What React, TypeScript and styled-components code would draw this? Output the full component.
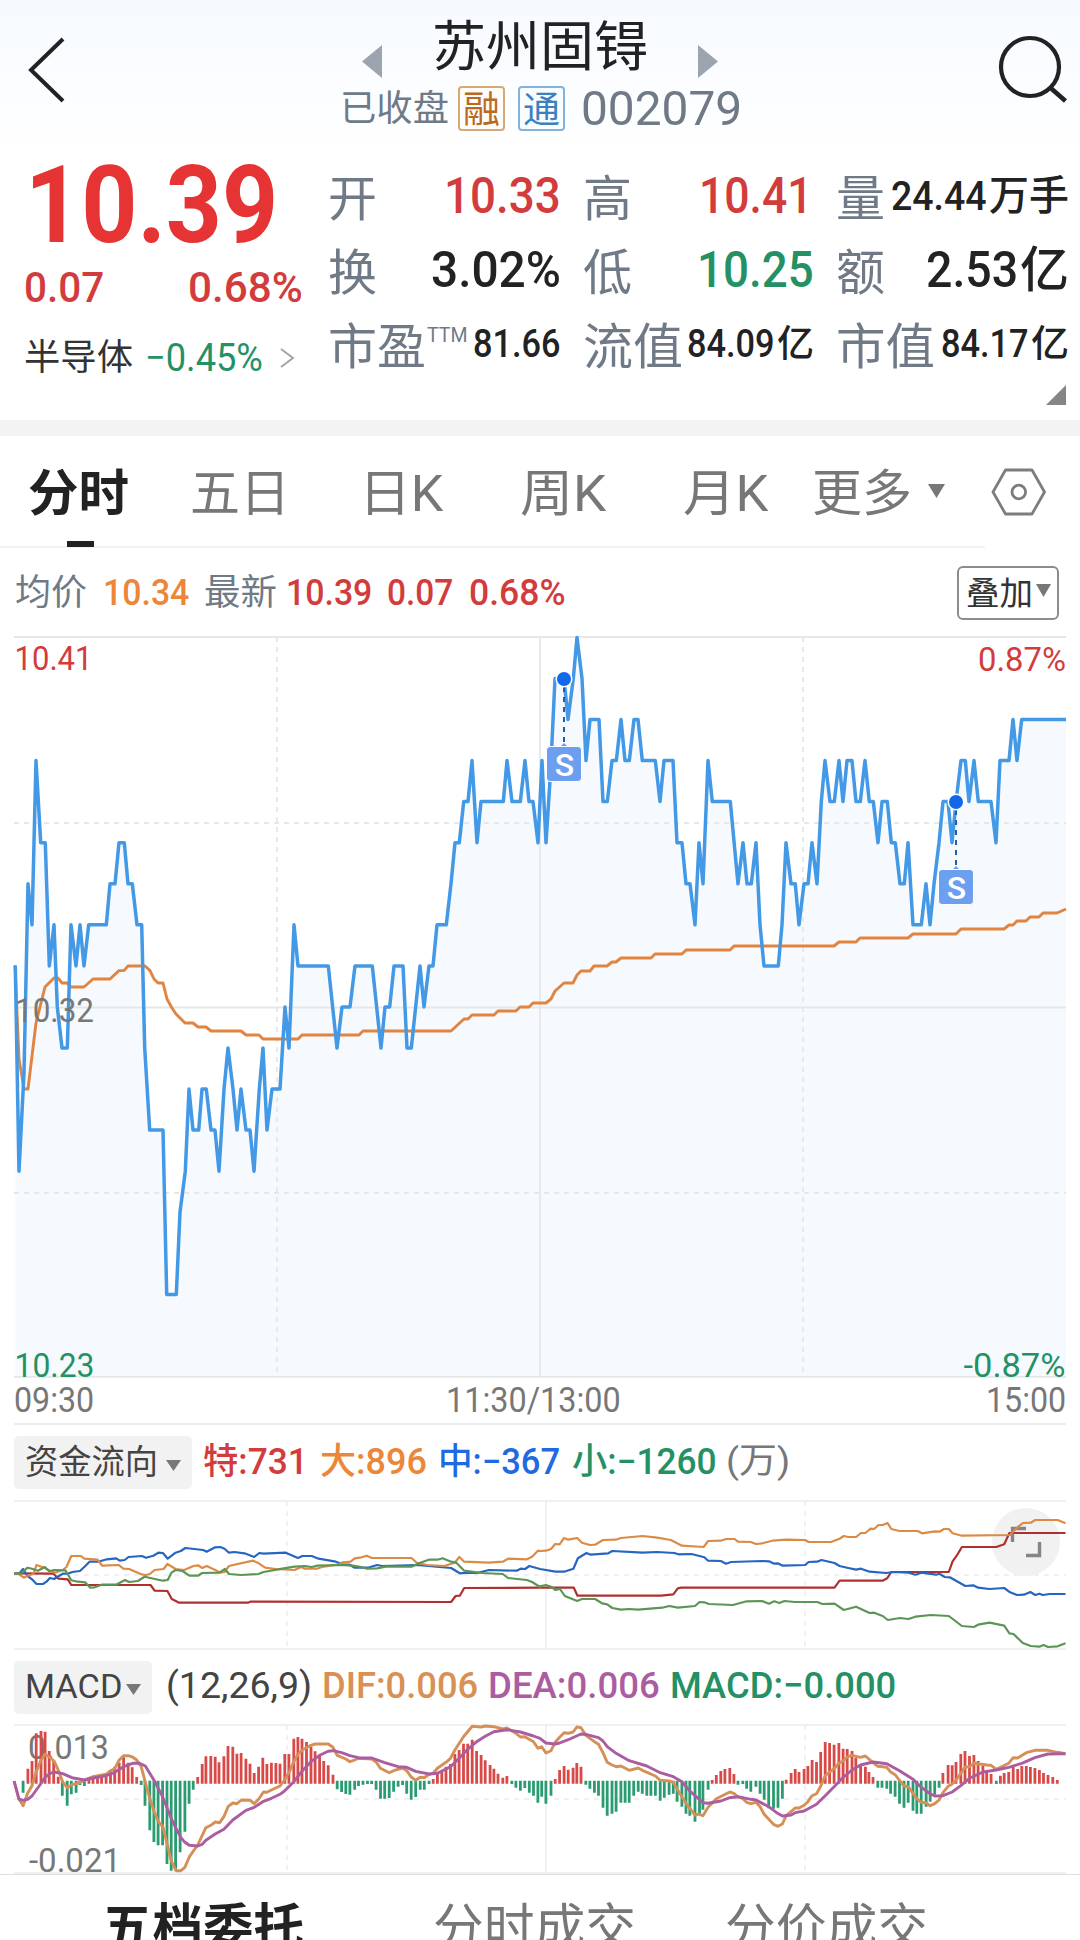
import React, { useLayoutEffect, useRef, useState } from 'react';
import styled, { createGlobalStyle, css } from 'styled-components';

const RED = '#d23c3c';
const GREEN = '#249165';
const ORANGE = '#ec8638';
const BLUE = '#1f6ae0';
const SLATE = '#6f7a86';
const INK = '#222222';
const GREY = '#777777';
const FONT = `Roboto, "Noto Sans CJK SC", sans-serif`;

const GlobalStyle = createGlobalStyle`
  *, *::before, *::after { box-sizing: border-box; }
  body { margin: 0; background: #fff; font-family: ${FONT}; }
`;

/* ---------- text that is squeezed or stretched to a set width ---------- */

const FitBox = styled.span<{ $w: number; $size: number; $color?: string; $weight?: number }>`
  display: inline-block;
  flex: none;
  width: ${p => p.$w}px;
  height: ${p => p.$size}px;
  font-size: ${p => p.$size}px;
  line-height: 1;
  color: ${p => p.$color || INK};
  font-weight: ${p => p.$weight || 400};
  white-space: nowrap;
`;
const FitInner = styled.span`
  display: inline-block;
  vertical-align: top;
  transform-origin: 0 0;
`;

type FitProps = { w: number; size: number; color?: string; weight?: number; children: string };

function Fit({ w, size, color, weight, children }: FitProps) {
  const ref = useRef<HTMLSpanElement>(null);
  const [scale, setScale] = useState(1);
  useLayoutEffect(() => {
    if (ref.current) setScale(w / ref.current.offsetWidth);
  }, [w, size, weight, children]);
  return (
    <FitBox $w={w} $size={size} $color={color} $weight={weight}>
      <FitInner ref={ref} style={{ transform: `scaleX(${scale})` }}>{children}</FitInner>
    </FitBox>
  );
}

/* ---------- layout parts ---------- */

const Page = styled.main`
  width: 1080px;
  height: 1940px;
  overflow: hidden;
  display: flex;
  flex-direction: column;
  background: #fff;
`;

const Header = styled.header`
  flex: none;
  height: 150px;
  display: grid;
  grid-template-columns: 100px 1fr 100px;
  background: linear-gradient(#f6faff, #ffffff);
`;
const IconSlot = styled.div`
  display: block;
  height: 150px;
  svg { display: block; }
`;
const HeaderCenter = styled.div`
  display: flex;
  flex-direction: column;
  align-items: center;
`;
const TitleRow = styled.div`
  display: flex;
  align-items: flex-end;
  gap: 50px;
  height: 78px;
`;
const TitleText = styled.div`
  display: flex;
  padding-bottom: 3px;
`;
const SubRow = styled.div`
  display: flex;
  align-items: center;
  height: 45px;
  margin: 8px 0 0 2px;
`;
const Badge = styled.span<{ $tone: string; $line: string; $fill: string; $gap: number }>`
  display: flex;
  justify-content: center;
  align-items: center;
  width: 47px;
  height: 45px;
  margin-left: ${p => p.$gap}px;
  padding-top: 3px;
  border: 2px solid ${p => p.$line};
  border-radius: 4px;
  background: ${p => p.$fill};
  color: ${p => p.$tone};
  font-size: 37px;
  line-height: 1;
`;
const Code = styled.span`
  display: flex;
  margin-left: 16px;
`;

const Quote = styled.section`
  flex: none;
  height: 270px;
  display: flex;
  flex-direction: column;
`;
const QuoteBody = styled.div`
  display: grid;
  grid-template-columns: 279px 742px;
  column-gap: 25px;
  height: 235px;
  padding-left: 24px;
`;
const PriceColumn = styled.div`
  display: flex;
  flex-direction: column;
  padding-top: 1px;
`;
const BigPrice = styled.div`
  display: flex;
  height: 115px;
  padding-left: 1px;
`;
const ChangeRow = styled.div`
  display: flex;
  justify-content: space-between;
  height: 44px;
`;
const SectorRow = styled.div`
  display: flex;
  align-items: center;
  gap: 12px;
  height: 40px;
  margin-top: 28px;
`;
const SectorArrow = styled.svg`
  margin-left: 4px;
`;
const Stats = styled.div`
  display: grid;
  grid-template-columns: 233px 231px 233px;
  grid-auto-rows: 74px;
  column-gap: 22px;
  padding-top: 9px;
`;
const Stat = styled.div`
  display: flex;
  align-items: center;
  justify-content: space-between;
`;
const StatLabel = styled.span`
  display: flex;
  padding-top: 7px;
`;
const StatSup = styled.span`
  display: flex;
  padding: 0 5px 18px 0;
`;
const StatValue = styled.span<{ $inset?: number }>`
  display: flex;
  align-items: center;
  gap: 2px;
  padding-right: ${p => p.$inset || 0}px;
`;
const CornerRow = styled.div`
  display: flex;
  justify-content: flex-end;
  padding-right: 14px;
`;
const Band = styled.div`
  flex: none;
  height: 16px;
  background: #f3f3f3;
`;

const TabBar = styled.nav`
  flex: none;
  display: flex;
  height: 112px;
`;
const TabList = styled.div`
  display: flex;
  width: 985px;
  padding: 5px 0 0 28px;
  border-bottom: 2px solid #f2f2f2;
`;
const Tab = styled.div<{ $w: number; $active?: boolean }>`
  position: relative;
  display: flex;
  align-items: center;
  gap: 16px;
  width: ${p => p.$w}px;
  ${p => p.$active && css`
    &::after {
      content: '';
      position: absolute;
      left: 39px;
      bottom: -1px;
      width: 27px;
      height: 6px;
      background: ${INK};
    }
  `}
`;
const TabSettings = styled.div`
  display: flex;
  align-items: center;
  padding-left: 5px;
`;

const InfoRow = styled.div`
  flex: none;
  display: flex;
  align-items: center;
  height: 88px;
  padding: 2px 21px 0 15px;
`;
const Item = styled.span<{ $gap?: number; $lift?: number }>`
  display: flex;
  margin-left: ${p => p.$gap || 0}px;
  padding-bottom: ${p => p.$lift || 0}px;
`;
const OverlayButton = styled.button`
  display: flex;
  align-items: center;
  gap: 4px;
  width: 102px;
  height: 54px;
  margin-left: auto;
  padding: 0 0 0 6px;
  border: 2px solid #8c8c8c;
  border-radius: 6px;
  background: #fff;
  font-family: inherit;
`;

const Chart = styled.svg`
  flex: none;
  display: block;
  margin-left: 14px;
  overflow: visible;
`;
const TimeAxis = styled.div`
  flex: none;
  display: flex;
  align-items: center;
  height: 47px;
  margin: 0 14px;
  border-bottom: 2px solid #ebebeb;
`;
const IndicatorRow = styled.div<{ $h: number }>`
  flex: none;
  display: flex;
  align-items: center;
  height: ${p => p.$h}px;
  padding-left: 14px;
`;
const Picker = styled.button<{ $w: number; $lift: number }>`
  display: flex;
  align-items: center;
  justify-content: space-between;
  width: ${p => p.$w}px;
  height: 53px;
  padding: 0 11px ${p => p.$lift}px 11px;
  border: 0;
  border-radius: 5px;
  background: #f2f2f2;
  font-family: inherit;
`;
const BottomTabs = styled.nav`
  flex: none;
  display: flex;
  height: 80px;
  padding: 28px 0 0 102px;
  border-top: 1px solid #dfdfdf;
`;

const Caret = ({ w, h, color = GREY, dy = 0 }: { w: number; h: number; color?: string; dy?: number }) => (
  <svg width={w} height={h + Math.abs(dy)} viewBox={`0 ${dy > 0 ? -dy : 0} ${w} ${h + Math.abs(dy)}`}>
    <path d={`M0 0H${w}L${w / 2} ${h}Z`} fill={color} />
  </svg>
);

/* ---------- price chart ---------- */

// x position and last price, in hundredths above 10.00
const PRICE = `15.3,33 19,28 24,30.4 28,35 32,34 36,38 40.7,36 45.3,36 49.3,33 54,34 57.3,32 62,31 67.3,31 71,34 76,33 80,34 84,33 88.7,34
106.3,34 110,35 115,35 119,36 124.3,36 128,35 132.3,35 137,34 141.7,34 144.7,31 149.7,29 163,29 166.7,25 176.3,25 180,27 185.3,28 189,30
193,29 198.7,29 202,30 206.3,30 211,29 215,29 219,28 224,30 228,31 233,30 237,29 241,30 246,29 250,29 254,28 259.3,30 263,31 267,29 272,30
280,30 285,32 289,31 294,34 298,33 328.3,33 337,31 342,32 350,32 355,33 372.3,33 381,31 385,32 389.7,32 394,33 403,33 407,31 411.3,31
420,33 424,32 429,33 433,33 437,34 446.3,34 451,35 455,36 459.3,36 463.7,37 468,37 472,38 477,36 481,37 503.3,37 507,38 512,37 520.3,37
525,38 529,37 533,37 538,36 542,38 546,36 550.5,37.7 555,40 564,40 568,39 573.3,40 577,41 582,40 586,38 590,39 599,39 603,37 607.3,37
612,38 616.3,38 621,39 625,38 629.3,38 634,39 638,39 642.3,38 655.3,38 660,37 664,38 673,38 677,36 682,36 686,35 690,35 695,34 699,36
703,35 708,38 712.3,37 730.3,37 738,35 743,36 747,35 751.3,35 756,36 760,34 764,33 778.3,33 782,34 786,36 791,35 795.3,35 799,34 804,35
808,35 812,36 817,35 821.3,37 825,38 830,37 834.3,37 839,38 843,37 847,38 852,38 856,37 860.3,37 865,38 869.3,37 873.3,37 878,36 882,37
887.3,37 891.3,36 895.3,36 900,35 904.3,35 908,36 913,34 921.3,34 926,35 930,34 934,35 939,36 943,37 948,37 952,36 956,37 961,38
965.3,38 969,37 974,38 978.3,37 991,37 996,36 1000,38 1009,38 1013,39 1017,38 1021.7,39 1066,39`;

const AVERAGE = `15,965 19,1059 24,1089 28,1089 36,1023 45,987 49,983 54,978 58,978 62,983 67,983 71,987 84,987 93,979 110,979 119,970.6
124,970.6 128,966 145,966 150,970.6 154,979 158,983 163,983 167,999 172,1008 176,1014 185,1023 193,1023 198,1027 206,1027 211,1031 241,1031
246,1035 259,1035 263,1039 298,1039 302,1035 359,1035 363,1031 451,1031 464,1019 468,1019 472,1015 494,1015 498,1011 516,1011 520,1007
529,1007 533,1003 546,1003 551,999 555,991 564,983 573,983 577,975 581,971 590,971 594,966 607,966 612,962 616,962 621,958 651,958 655,954
682,954 686,950 730,950 734,946 834,946 839,942 856,942 860,938 908,938 913,934 956,934 961,929 1004,929 1009,925 1013,925 1017,921
1026,921 1030,917 1039,917 1043,913 1057,913 1066,909`;

const parse = (raw: string): number[][] => raw.trim().split(/\s+/).map(p => p.split(',').map(Number));
const join = (pts: number[][]) => pts.map(([x, y]) => `${x.toFixed(1)},${y.toFixed(1)}`).join(' ');

const priceY = (cents: number) => 637.4 + (41 - cents) * 41.06;
const pricePoints = join(parse(PRICE).map(([x, c]) => [x, priceY(c)]));

const Label = ({ x, y, w, size = 34, color, children }: { x: number; y: number; w: number; size?: number; color: string; children: string }) => (
  <text x={x} y={y} textLength={w} lengthAdjust="spacingAndGlyphs" fontSize={size} fill={color} fontFamily={FONT}>{children}</text>
);

const Marker = ({ x, y }: { x: number; y: number }) => (
  <g>
    <path d={`M${x} ${y + 8}V${y + 64}`} stroke="#1f5fae" strokeWidth="2" strokeDasharray="5 5" />
    <circle cx={x} cy={y} r="8.5" fill="#fff" />
    <circle cx={x} cy={y} r="7" fill="#1268e8" />
    <path d={`M${x - 5} ${y + 69}L${x} ${y + 64}L${x + 5} ${y + 69}Z`} fill="#6d9ff1" />
    <rect x={x - 17.5} y={y + 67.5} width="35" height="35" rx="3.5" fill="#6d9ff1" stroke="#fff" strokeWidth="1" />
    <text x={x + 0.5} y={y + 96.5} textAnchor="middle" fontSize="32" fontWeight="500" fill="#fff" fontFamily={FONT}>S</text>
  </g>
);

const PriceChart = () => (
  <Chart width="1052" height="742" viewBox="14 636 1052 742">
    <polygon points={`15.3,1377 ${pricePoints} 1066,1377`} fill="#f6faff" />
    <g stroke="#e6e8e8" strokeWidth="1.8" fill="none">
      <path d="M14 637H1066M14 1007.5H1066M14 1376.8H1066M540 637V1377" />
      <path d="M14 823H1066M14 1193H1066" strokeDasharray="5 5" />
      <path d="M277 637V1377M803 637V1377" strokeDasharray="5 5" />
    </g>
    <polyline points={AVERAGE} fill="none" stroke="#e0843f" strokeWidth="2.9" strokeLinejoin="round" />
    <polyline points={pricePoints} fill="none" stroke="#4499e6" strokeWidth="3.5" strokeLinejoin="round" />
    <Label x={15} y={1022} w={79} color={GREY}>10.32</Label>
    <Label x={14.5} y={670} w={78} color={RED}>10.41</Label>
    <Label x={978} y={671} w={88} color={RED}>0.87%</Label>
    <Label x={14.5} y={1377} w={80} color={GREEN}>10.23</Label>
    <Label x={963.5} y={1377} w={102} color={GREEN}>-0.87%</Label>
    <Marker x={564} y={679} />
    <Marker x={956} y={802} />
  </Chart>
);

/* ---------- sub charts: samples of the morning and the afternoon half ---------- */

const UNIT_X = 540 / 1568;
const half = (raw: string, x0: number, y0: number) => parse(raw).map(([x, y]) => [x0 + x * UNIT_X, y0 + y / 3]);
const whole = (am: string, pm: string, y0: number) => join([...half(am, 0, y0), ...half(pm, 540, y0)]);

const FLOW = [
  {
    color: '#b03030',
    am: `41,670 155,671 170,686 197,688 207,705 437,705 449,722 486,723 499,747 520,758 720,758 727,755 1310,756 1323,738 1335,737 1348,714 1568,713`,
    pm: `0,713 98,713 109,737 352,737 387,733 400,715 410,713 855,713 870,692 995,692 1008,685 1020,666 1187,666 1198,634 1210,617 1225,591 1325,591 1348,583 1363,549 1526,549`,
  },
  {
    color: '#2665c0',
    am: `41,670 55,672 67,657 80,678 93,688 106,702 125,702 135,695 145,684 157,687 182,671 197,671 210,666 232,663 247,649 260,635 285,635 310,628 337,625 348,632 362,630 373,621 412,618 424,623 445,617 460,608 473,609 487,626 510,608 525,603 538,594 590,600 600,605 625,592 640,591 652,596 665,608 680,606 710,610 738,621 753,609 765,611 830,608 865,624 878,618 905,618 925,626 975,635 995,643 1015,644 1030,653 1068,653 1095,645 1110,648 1210,645 1310,654 1335,670 1360,668 1385,669 1420,660 1500,662 1512,656 1525,657 1537,648 1568,657`,
    pm: `0,657 45,665 70,665 97,656 110,625 135,609 147,614 198,610 210,603 298,608 340,606 390,609 402,613 440,612 477,622 488,632 525,633 540,641 555,636 645,633 665,634 680,641 690,640 705,647 770,645 780,636 805,635 817,630 855,639 870,648 895,654 918,659 932,656 957,665 1005,669 1025,666 1070,668 1090,674 1108,668 1150,674 1160,671 1175,681 1190,682 1235,708 1258,706 1272,713 1305,717 1348,714 1365,727 1385,735 1405,734 1424,726 1438,735 1450,731 1460,735 1480,732 1526,732`,
  },
  {
    color: '#dc8a44',
    am: `41,670 55,672 69,683 80,677 97,672 106,645 130,654 145,662 160,668 182,660 193,651 207,618 235,618 245,626 283,629 297,647 345,645 358,656 375,657 410,673 424,675 435,672 449,660 475,657 486,642 510,657 535,660 562,648 575,646 587,654 600,648 625,660 640,668 652,666 665,648 690,642 735,632 748,638 770,653 800,657 855,660 875,651 885,656 920,656 935,651 985,643 995,637 1018,635 1030,625 1050,622 1065,617 1080,624 1195,624 1210,638 1240,645 1290,648 1320,638 1334,621 1348,635 1420,638 1460,635 1475,626 1530,628 1545,620 1562,602`,
    pm: `0,603 17,602 32,597 44,582 57,583 70,564 82,569 108,564 122,578 145,585 160,584 183,570 220,569 235,564 298,558 340,563 380,570 412,587 475,591 488,573 525,572 540,567 565,567 575,575 612,576 627,582 645,580 675,572 715,569 770,570 780,576 845,576 870,566 882,558 895,561 918,561 932,549 945,549 960,536 970,537 983,525 995,525 1009,519 1020,537 1044,543 1097,543 1109,550 1147,544 1160,545 1173,537 1187,537 1198,550 1225,557 1365,555 1385,533 1402,519 1425,518 1438,510 1503,510 1526,520`,
  },
  {
    color: '#5c9656',
    am: `41,670 60,671 80,653 93,656 110,662 130,651 143,664 157,660 190,661 207,691 220,694 247,697 262,713 275,712 295,704 337,704 363,690 375,696 400,693 420,680 473,692 487,690 498,668 510,660 530,663 550,677 575,677 587,669 637,668 653,657 665,672 700,675 750,672 765,666 820,656 855,650 885,648 905,651 920,647 985,645 1025,647 1050,651 1065,656 1095,655 1120,650 1195,650 1220,638 1245,629 1270,629 1285,625 1310,635 1325,638 1348,662 1400,669 1460,672 1475,684 1530,690 1545,696 1568,711`,
    pm: `0,709 17,705 32,710 45,720 58,717 72,738 108,753 122,747 160,747 180,760 195,763 210,774 235,779 258,777 285,779 355,773 375,768 400,773 450,768 463,756 477,757 490,762 560,765 600,754 645,753 665,761 680,754 695,759 710,753 740,756 805,756 820,762 855,761 882,780 918,770 957,789 970,788 995,798 1010,810 1045,804 1070,807 1090,800 1135,795 1187,798 1225,828 1260,831 1272,824 1305,818 1348,827 1363,850 1375,852 1402,879 1425,888 1450,890 1462,885 1475,891 1503,889 1526,880`,
  },
];

const SubGrid = ({ top }: { top: number }) => (
  <g stroke="#f0f0f0" strokeWidth="1.8" fill="none">
    <path d={`M14 ${top}H1066M14 ${top + 148}H1066M546 ${top}V${top + 148}`} />
    <path d={`M14 ${top + 74}H1066M287 ${top}V${top + 148}M805 ${top}V${top + 148}`} strokeDasharray="5 5" />
  </g>
);

const FlowChart = () => (
  <Chart width="1052" height="151" viewBox="14 1500 1052 151">
    <SubGrid top={1501} />
    <circle cx="1026" cy="1542" r="34" fill="#f1f1f1" />
    <path d="M1012.5 1542V1528.5H1026M1039.5 1542V1555.5H1026" fill="none" stroke="#858585" strokeWidth="3.4" />
    {FLOW.map(s => (
      <polyline key={s.color} points={whole(s.am, s.pm, 1350)} fill="none" stroke={s.color} strokeWidth="2.2" strokeLinejoin="round" />
    ))}
  </Chart>
);

const BARS_AM = `67,428 81,356 93,333 105,250 119,243 131,245 143,303 156,333 169,380 181,437 195,467 207,433 221,428 232,405 245,408 258,385 270,381 283,378 295,375 308,370 321,362 333,350 346,338 359,322 372,338 384,352 397,381 410,405 421,467 435,541 447,576 459,586 472,586 485,642 497,662 510,658 523,607 537,545 549,461 561,419 574,381 587,342 598,319 612,318 625,320 636,337 650,319 662,288 676,290 688,311 700,309 714,326 726,341 738,369 751,350 763,323 775,342 788,338 801,339 813,341 827,312 839,312 853,266 865,261 877,266 890,276 903,290 915,304 928,318 940,333 953,346 967,374 979,418 992,426 1004,432 1016,434 1030,419 1041,408 1054,404 1067,402 1079,402 1092,419 1105,446 1117,446 1130,444 1143,425 1156,410 1169,405 1181,431 1194,449 1207,441 1220,419 1232,419 1246,402 1258,387 1270,371 1283,365 1295,350 1308,342 1321,312 1333,300 1346,281 1358,281 1371,269 1384,303 1397,315 1409,331 1423,345 1434,356 1446,371 1460,383 1472,378 1486,402 1498,413 1511,422 1524,414 1537,428 1549,437 1562,458`;
const BARS_PM = `5,440 17,461 32,437 44,387 57,360 70,348 82,359 96,353 107,339 119,350 133,404 145,416 158,428 170,437 183,473 195,497 209,491 221,485 235,458 247,458 259,458 272,437 285,425 297,431 310,437 322,437 335,437 349,452 361,443 375,434 387,431 398,455 412,470 424,491 435,497 450,515 463,494 473,479 488,419 500,390 512,375 525,363 537,357 551,354 563,372 575,404 589,402 600,416 612,425 627,410 639,431 651,449 664,475 678,476 691,473 704,446 715,389 729,369 741,357 752,366 767,357 778,348 790,330 803,336 815,306 828,276 841,279 854,284 868,279 880,296 892,297 906,303 917,323 931,342 945,350 955,366 967,381 981,413 993,413 1007,416 1018,431 1031,440 1044,461 1057,473 1069,458 1083,482 1094,491 1107,491 1121,470 1133,455 1146,434 1159,413 1170,369 1185,345 1197,346 1208,336 1222,312 1234,303 1247,318 1260,315 1272,333 1286,348 1297,363 1310,372 1325,402 1337,377 1348,369 1361,366 1374,351 1387,357 1399,348 1412,348 1424,351 1437,354 1450,360 1462,369 1475,375 1489,381 1502,390`;

const DIF_AM = `41,393 55,447 67,467 80,430 93,407 105,365 118,333 131,313 144,322 157,333 170,362 182,396 195,413 209,404 232,398 245,390 270,380 308,373 321,362 333,356 346,330 359,317 372,317 385,321 397,330 410,350 422,397 435,445 447,483 460,515 473,530 485,580 497,632 511,662 525,662 537,652 550,620 574,585 598,533 612,526 625,516 638,518 650,500 662,470 676,459 688,461 701,450 727,451 738,461 751,448 765,426 775,427 788,420 813,408 826,390 840,366 853,335 865,313 878,300 903,286 915,282 953,282 967,292 979,316 1004,327 1016,335 1030,330 1041,325 1080,327 1092,336 1105,355 1130,368 1143,362 1169,354 1181,362 1194,381 1207,391 1220,382 1232,383 1246,373 1258,370 1270,355 1295,337 1308,325 1321,300 1346,260 1371,229 1397,231 1409,228 1434,230 1460,237 1472,234 1498,250 1511,261 1524,260 1549,275 1562,295`;
const DIF_PM = `5,290 17,309 32,302 44,277 57,262 70,248 82,250 96,246 107,231 119,233 133,256 158,275 170,283 183,308 195,337 209,345 221,350 235,348 259,361 285,354 297,361 335,378 349,391 375,393 387,397 398,417 424,460 450,495 460,492 473,497 488,472 512,446 551,426 563,430 575,441 589,446 600,457 612,461 627,457 639,470 651,493 678,523 691,529 704,522 715,497 741,474 752,474 767,466 778,455 790,437 803,431 815,409 828,377 854,356 868,340 880,333 892,321 906,316 931,322 945,318 967,338 981,349 1007,352 1018,366 1031,374 1057,408 1069,410 1083,430 1094,446 1107,457 1121,459 1133,467 1146,461 1159,450 1170,428 1185,409 1197,402 1208,391 1222,370 1234,352 1247,350 1260,340 1297,345 1310,346 1325,358 1361,340 1374,323 1387,324 1412,308 1437,301 1475,301 1502,307 1526,311`;
const DEA_AM = `41,393 55,447 67,451 80,448 93,438 118,402 131,382 144,371 157,366 182,371 209,383 245,390 270,384 308,377 333,367 359,350 385,340 405,340 422,348 447,390 472,440 485,473 497,505 511,535 525,562 537,577 550,586 574,588 587,583 598,571 625,552 650,538 676,510 714,481 738,472 763,455 788,445 813,433 826,423 853,395 878,362 903,335 928,316 953,304 967,302 992,308 1016,317 1041,323 1080,324 1117,338 1156,350 1181,352 1207,364 1246,372 1270,370 1308,350 1333,325 1358,298 1384,275 1409,259 1434,245 1472,239 1511,246 1549,258 1568,265`;
const DEA_PM = `0,265 17,279 44,282 57,279 82,269 119,252 133,253 170,263 183,273 195,290 221,310 259,332 310,348 349,368 387,380 412,395 437,425 473,458 488,460 525,453 551,443 575,440 612,448 627,450 664,470 690,490 704,498 729,495 741,488 767,483 803,463 828,437 854,410 880,382 906,360 931,345 967,336 1007,341 1044,362 1083,388 1107,412 1133,431 1146,438 1170,437 1197,426 1222,407 1247,385 1286,366 1325,360 1361,352 1399,340 1437,323 1475,312 1526,311`;

const bars = [...half(BARS_AM, 0, 1650), ...half(BARS_PM, 540, 1650)];
const barPath = (up: boolean) =>
  bars
    .filter(([, y]) => (y < 1782.3) === up)
    .map(([x, y]) => `M${x.toFixed(1)} ${up ? 1783.7 : 1780.7}V${y.toFixed(1)}`)
    .join('');

const MacdChart = () => (
  <Chart width="1052" height="150" viewBox="14 1724 1052 150">
    <SubGrid top={1725} />
    <Label x={28} y={1759} w={81} color={GREY}>0.013</Label>
    <Label x={29} y={1872} w={92} color={GREY}>-0.021</Label>
    <path d={barPath(true)} stroke="#d84a48" strokeWidth="2.8" />
    <path d={barPath(false)} stroke="#2b9c71" strokeWidth="2.8" />
    <polyline points={whole(DIF_AM, DIF_PM, 1650)} fill="none" stroke="#d49057" strokeWidth="2.9" strokeLinejoin="round" />
    <polyline points={whole(DEA_AM, DEA_PM, 1650)} fill="none" stroke="#ab5da0" strokeWidth="2.9" strokeLinejoin="round" />
  </Chart>
);

/* ---------- page ---------- */

export default function App() {
  return (
    <>
      <GlobalStyle />
      <Page>
        <Header>
          <IconSlot>
            <svg width="100" height="150" viewBox="0 0 100 150">
              <path d="M63 39L31 70L63 101" fill="none" stroke={INK} strokeWidth="4" />
            </svg>
          </IconSlot>
          <HeaderCenter>
            <TitleRow>
              <svg width="20" height="33" viewBox="0 0 20 33"><path d="M20 0V33L0 16.5Z" fill="#9ba4af" /></svg>
              <TitleText><Fit w={216} size={54}>苏州固锝</Fit></TitleText>
              <svg width="20" height="33" viewBox="0 0 20 33"><path d="M0 0V33L20 16.5Z" fill="#9ba4af" /></svg>
            </TitleRow>
            <SubRow>
              <Fit w={109} size={36} color={SLATE}>已收盘</Fit>
              <Badge $tone="#b96a20" $line="#d7a877" $fill="#fffdf9" $gap={9}>融</Badge>
              <Badge $tone="#3c80bd" $line="#83b2dc" $fill="#f9fdff" $gap={13}>通</Badge>
              <Code><Fit w={161} size={49} color={SLATE}>002079</Fit></Code>
            </SubRow>
          </HeaderCenter>
          <IconSlot>
            <svg width="100" height="150" viewBox="980 0 100 150">
              <circle cx="1030" cy="67" r="29" fill="none" stroke={INK} strokeWidth="4.2" />
              <path d="M1049.5 87L1065.5 101" stroke={INK} strokeWidth="4.6" />
            </svg>
          </IconSlot>
        </Header>

        <Quote>
          <QuoteBody>
            <PriceColumn>
              <BigPrice><Fit w={253} size={108} color="#e63333" weight={700}>10.39</Fit></BigPrice>
              <ChangeRow>
                <Fit w={80} size={43} color={RED} weight={500}>0.07</Fit>
                <Fit w={115} size={43} color={RED} weight={500}>0.68%</Fit>
              </ChangeRow>
              <SectorRow>
                <Fit w={109} size={36} color="#333">半导体</Fit>
                <Fit w={118} size={39} color={GREEN}>−0.45%</Fit>
                <SectorArrow width="16" height="22" viewBox="0 0 16 22">
                  <path d="M2 2L14 11L2 20" fill="none" stroke="#a0a5aa" strokeWidth="2" />
                </SectorArrow>
              </SectorRow>
            </PriceColumn>
            <Stats>
              <Stat>
                <StatLabel><Fit w={49} size={49} color={SLATE}>开</Fit></StatLabel>
                <StatValue><Fit w={117} size={50} color={RED} weight={500}>10.33</Fit></StatValue>
              </Stat>
              <Stat>
                <StatLabel><Fit w={49} size={49} color={SLATE}>高</Fit></StatLabel>
                <StatValue $inset={1}><Fit w={114} size={50} color={RED} weight={500}>10.41</Fit></StatValue>
              </Stat>
              <Stat>
                <StatLabel><Fit w={49} size={49} color={SLATE}>量</Fit></StatLabel>
                <StatValue><Fit w={96} size={41} weight={500}>24.44</Fit><Fit w={80} size={41} weight={500}>万手</Fit></StatValue>
              </Stat>
              <Stat>
                <StatLabel><Fit w={49} size={49} color={SLATE}>换</Fit></StatLabel>
                <StatValue><Fit w={130} size={50} weight={500}>3.02%</Fit></StatValue>
              </Stat>
              <Stat>
                <StatLabel><Fit w={49} size={49} color={SLATE}>低</Fit></StatLabel>
                <StatValue><Fit w={117} size={50} color={GREEN} weight={500}>10.25</Fit></StatValue>
              </Stat>
              <Stat>
                <StatLabel><Fit w={49} size={49} color={SLATE}>额</Fit></StatLabel>
                <StatValue><Fit w={92} size={50} weight={500}>2.53</Fit><Fit w={49} size={49} weight={500}>亿</Fit></StatValue>
              </Stat>
              <Stat>
                <StatLabel><Fit w={98} size={49} color={SLATE}>市盈</Fit></StatLabel>
                <StatSup><Fit w={40} size={20} color={SLATE}>TTM</Fit></StatSup>
                <StatValue><Fit w={88} size={39} weight={500}>81.66</Fit></StatValue>
              </Stat>
              <Stat>
                <StatLabel><Fit w={100} size={49} color={SLATE}>流值</Fit></StatLabel>
                <StatValue><Fit w={88} size={39} weight={500}>84.09</Fit><Fit w={37} size={37} weight={500}>亿</Fit></StatValue>
              </Stat>
              <Stat>
                <StatLabel><Fit w={99} size={49} color={SLATE}>市值</Fit></StatLabel>
                <StatValue><Fit w={88} size={39} weight={500}>84.17</Fit><Fit w={38} size={37} weight={500}>亿</Fit></StatValue>
              </Stat>
            </Stats>
          </QuoteBody>
          <CornerRow>
            <svg width="20" height="20" viewBox="0 0 20 20"><path d="M20 0V20H0Z" fill="#858585" /></svg>
          </CornerRow>
        </Quote>

        <Band />

        <TabBar>
          <TabList>
            <Tab $w={162} $active><Fit w={101} size={50} weight={700}>分时</Fit></Tab>
            <Tab $w={169}><Fit w={100} size={50} color={GREY}>五日</Fit></Tab>
            <Tab $w={161}><Fit w={84} size={50} color={GREY}>日K</Fit></Tab>
            <Tab $w={163}><Fit w={86} size={50} color={GREY}>周K</Fit></Tab>
            <Tab $w={129}><Fit w={85} size={50} color={GREY}>月K</Fit></Tab>
            <Tab $w={140}><Fit w={100} size={50} color={GREY}>更多</Fit><Caret w={17} h={14} dy={-5} /></Tab>
          </TabList>
          <TabSettings>
            <svg width="58" height="52" viewBox="990 466 58 52">
              <path d="M1005.5 470H1032L1044.5 492L1032 514H1005.5L993 492Z" fill="none" stroke="#7d7d7d" strokeWidth="2.8" strokeLinejoin="round" />
              <circle cx="1018.8" cy="492" r="6.8" fill="none" stroke="#7d7d7d" strokeWidth="2.8" />
            </svg>
          </TabSettings>
        </TabBar>

        <InfoRow>
          <Item><Fit w={72} size={36} color={SLATE}>均价</Fit></Item>
          <Item $gap={16} $lift={2}><Fit w={86} size={37} color={ORANGE} weight={500}>10.34</Fit></Item>
          <Item $gap={15}><Fit w={73} size={36} color={SLATE}>最新</Fit></Item>
          <Item $gap={9} $lift={2}><Fit w={86} size={37} color={RED} weight={500}>10.39</Fit></Item>
          <Item $gap={15} $lift={2}><Fit w={66} size={37} color={RED} weight={500}>0.07</Fit></Item>
          <Item $gap={16} $lift={2}><Fit w={97} size={37} color={RED} weight={500}>0.68%</Fit></Item>
          <OverlayButton>
            <Fit w={67} size={33} color="#333">叠加</Fit>
            <Caret w={15} h={13} dy={-6} />
          </OverlayButton>
        </InfoRow>

        <PriceChart />

        <TimeAxis>
          <Item><Fit w={80} size={35} color={GREY}>09:30</Fit></Item>
          <Item $gap={352}><Fit w={175} size={35} color={GREY}>11:30/13:00</Fit></Item>
          <Item $gap={365}><Fit w={80} size={35} color={GREY}>15:00</Fit></Item>
        </TimeAxis>

        <IndicatorRow $h={75}>
          <Picker $w={178} $lift={2}><Fit w={133} size={34} color="#444">资金流向</Fit><Caret w={15} h={11} dy={7} /></Picker>
          <Item $gap={11} $lift={2}><Fit w={105} size={36} color={RED} weight={500}>特:731</Fit></Item>
          <Item $gap={12} $lift={2}><Fit w={107} size={36} color={ORANGE} weight={500}>大:896</Fit></Item>
          <Item $gap={11} $lift={2}><Fit w={122} size={36} color={BLUE} weight={500}>中:−367</Fit></Item>
          <Item $gap={12} $lift={2}><Fit w={145} size={36} color={GREEN} weight={500}>小:−1260</Fit></Item>
          <Item $gap={9} $lift={2}><Fit w={64} size={35} color={GREY}>(万)</Fit></Item>
        </IndicatorRow>
        <FlowChart />

        <IndicatorRow $h={73}>
          <Picker $w={138} $lift={4}><Fit w={97} size={34} color="#444">MACD</Fit><Caret w={15} h={11} dy={8} /></Picker>
          <Item $gap={14} $lift={5}><Fit w={146} size={37} color="#444">(12,26,9)</Fit></Item>
          <Item $gap={10} $lift={5}><Fit w={156} size={37} color="#d89055" weight={500}>DIF:0.006</Fit></Item>
          <Item $gap={10} $lift={5}><Fit w={172} size={37} color="#ab5da0" weight={500}>DEA:0.006</Fit></Item>
          <Item $gap={10} $lift={5}><Fit w={226} size={37} color={GREEN} weight={500}>MACD:−0.000</Fit></Item>
        </IndicatorRow>
        <MacdChart />

        <BottomTabs>
          <Item><Fit w={202} size={50} weight={700}>五档委托</Fit></Item>
          <Item $gap={129}><Fit w={203} size={50} color={GREY}>分时成交</Fit></Item>
          <Item $gap={89}><Fit w={203} size={50} color={GREY}>分价成交</Fit></Item>
        </BottomTabs>
      </Page>
    </>
  );
}
